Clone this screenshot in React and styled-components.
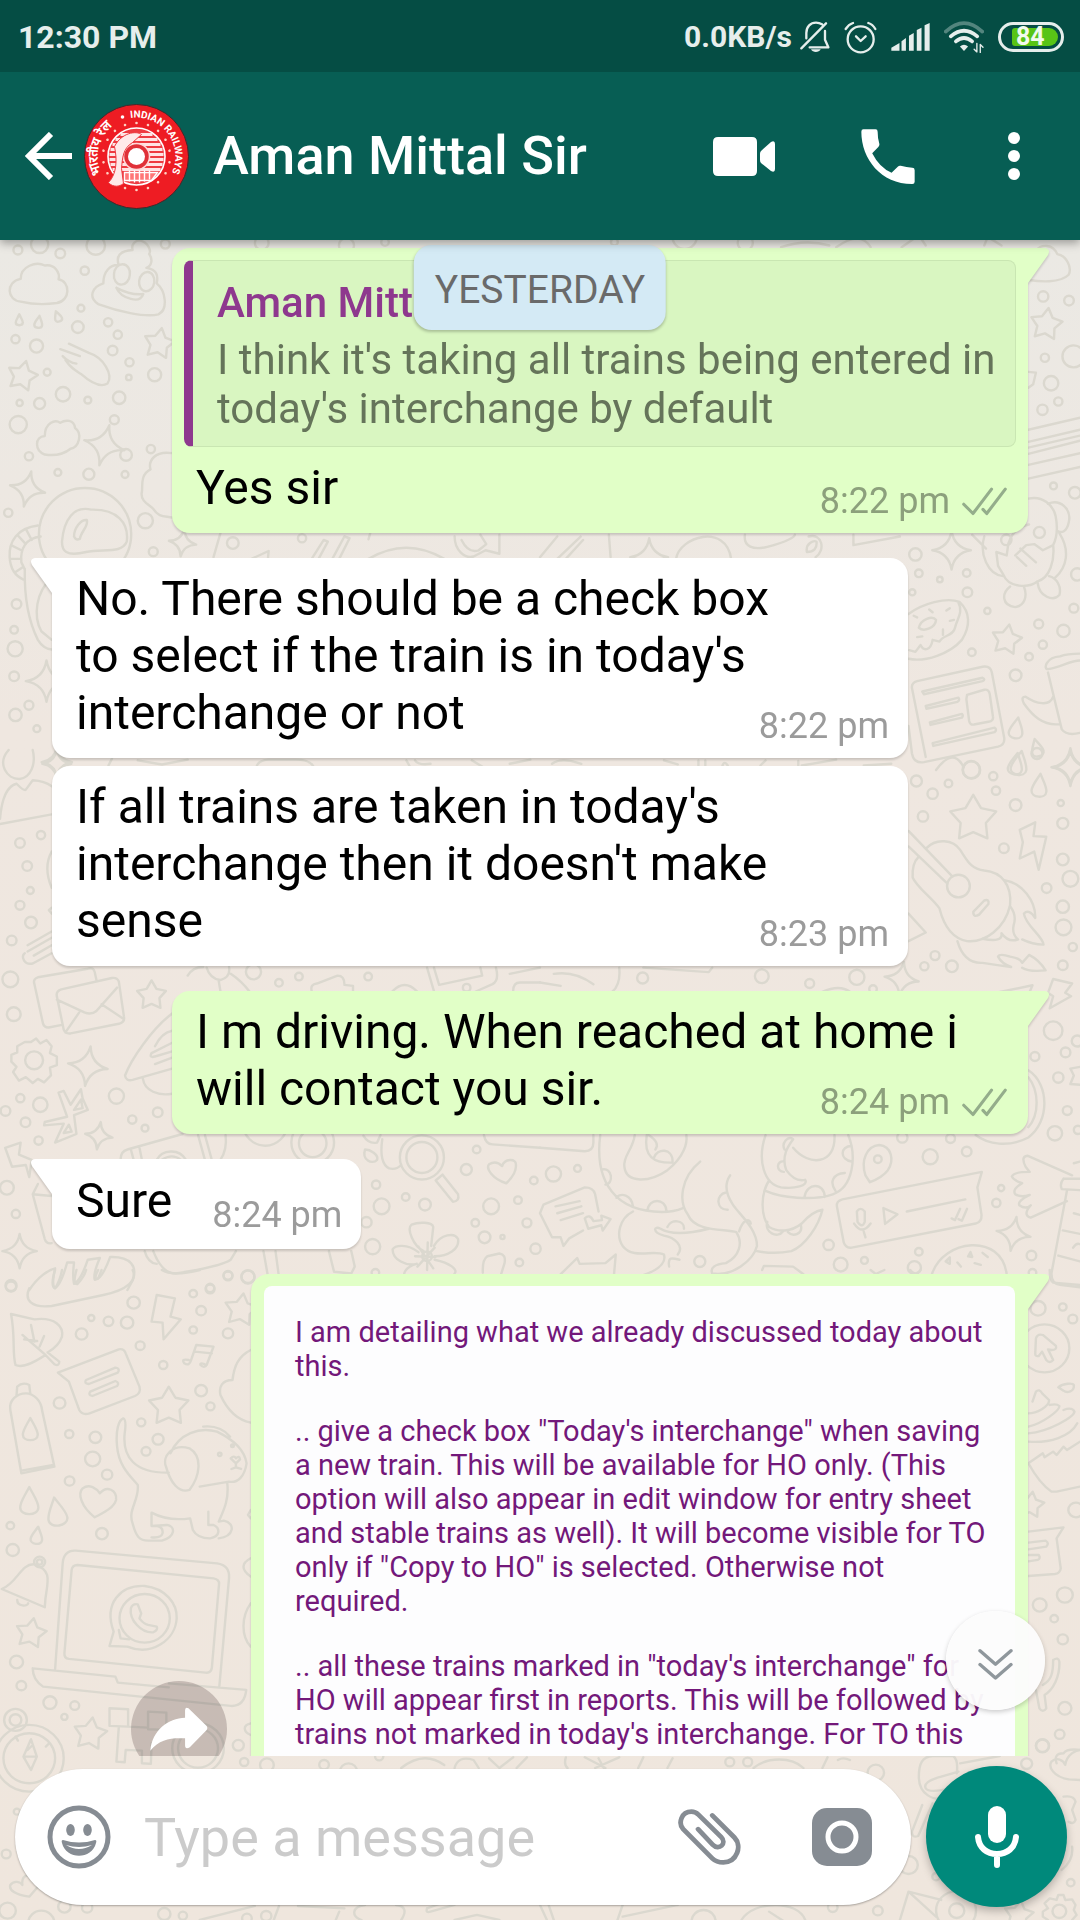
import React from "react";
import styled, { createGlobalStyle } from "styled-components";

const GlobalStyle = createGlobalStyle`
  *, *::before, *::after { box-sizing: border-box; }
  body { margin: 0; font-family: Roboto, "Noto Sans", sans-serif; }
  button { border: 0; padding: 0; background: none; color: inherit; font: inherit; cursor: pointer; }
  svg { display: block; }
`;

/* ---------- page ---------- */

const Screen = styled.div`
  position: relative;
  display: flex;
  flex-direction: column;
  height: 100vh;
  overflow: hidden;
  background: linear-gradient(#e9eae6, #efe7e0 38%, #efe6dd);
`;

const WallpaperSvg = styled.svg`
  position: absolute;
  inset: 0;
  width: 100%;
  height: 100%;
  fill: none;
  stroke: #dbd8cf;
  stroke-width: 7;
  stroke-linecap: round;
  stroke-linejoin: round;
`;

/* ---------- status bar ---------- */

const StatusBar = styled.div`
  position: relative;
  z-index: 3;
  flex: none;
  display: flex;
  align-items: center;
  justify-content: space-between;
  height: 72px;
  padding: 2px 16px 0 18px;
  background: #054d44;
  color: #e6eeec;
  font-weight: 700;
`;

const Clock = styled.time`
  font-size: 32px;
  line-height: 38px;
`;

const StatusRight = styled.div`
  display: flex;
  align-items: center;
  gap: 8px;
  font-size: 30px;
  line-height: 36px;
`;

const StatusIcons = styled.div`
  display: flex;
  align-items: center;
  gap: 14px;
`;

const Glyph = styled.svg`
  flex: none;
  width: ${(p) => p.$w}px;
  height: ${(p) => p.$h}px;
  fill: ${(p) => (p.$line ? "none" : "currentColor")};
  stroke: ${(p) => (p.$line ? "currentColor" : "none")};
  stroke-width: ${(p) => p.$line || 0};
  stroke-linecap: round;
  stroke-linejoin: round;
`;

const Battery = styled.div`
  display: flex;
  width: 66px;
  height: 30px;
  padding: 3px 3px 3px 11px;
  border: 3px solid #e6eeec;
  border-radius: 15px;
`;

const BatteryLevel = styled.span`
  flex: 1;
  padding-left: 4px;
  border-radius: 3px 9px 9px 3px;
  background: #58c416;
  color: #f2faee;
  font-size: 25px;
  line-height: 18px;
`;

/* ---------- header ---------- */

const Header = styled.header`
  position: relative;
  z-index: 2;
  flex: none;
  display: flex;
  align-items: center;
  height: 168px;
  padding: 0 12px 0 24px;
  background: #075e54;
  color: #fff;
  box-shadow: 0 3px 9px rgba(0, 0, 0, 0.35);
`;

const BackButton = styled.button`
  width: 60px;
  height: 96px;
  display: flex;
  align-items: center;
`;

const AvatarSvg = styled.svg`
  flex: none;
  width: 105px;
  height: 105px;
`;

const Title = styled.h1`
  flex: 1;
  margin: 0 0 0 24px;
  font-size: 54px;
  font-weight: 500;
  line-height: 64px;
  white-space: nowrap;
`;

const HeaderButton = styled.button`
  flex: none;
  display: flex;
  align-items: center;
  justify-content: center;
  width: ${(p) => (p.$narrow ? 108 : 144)}px;
  height: 144px;
`;

/* ---------- conversation ---------- */

const Conversation = styled.main`
  position: relative;
  flex: 1;
  min-height: 0;
  overflow: hidden;
`;

const MessageList = styled.ol`
  display: flex;
  flex-direction: column;
  margin: 0;
  padding: 8px 52px 0;
  list-style: none;
`;

const Row = styled.li`
  position: relative;
  display: flex;
  align-items: center;
  justify-content: ${(p) => (p.$out ? "flex-end" : "flex-start")};
  margin-bottom: ${(p) => (p.$joined ? 8 : 25)}px;
`;

const Bubble = styled.article`
  position: relative;
  width: ${(p) => (p.$photo ? "calc(100% - 199px)" : p.$fit ? "auto" : "calc(100% - 120px)")};
  border-radius: ${(p) =>
    p.$tail === "right" ? "18px 0 18px 18px" : p.$tail === "left" ? "0 18px 18px 18px" : "18px"};
  background: ${(p) => (p.$out ? "#e1ffc7" : "#fff")};
  color: ${(p) => (p.$out ? "#e1ffc7" : "#fff")};
  filter: drop-shadow(0 2px 1px rgba(0, 0, 0, 0.16));
`;

const TailSvg = styled.svg`
  position: absolute;
  top: 0;
  ${(p) => (p.$side === "right" ? "left: 100%;" : "right: 100%; transform: scaleX(-1);")}
  width: 21px;
  height: 35px;
  fill: currentColor;
`;

const Body = styled.div`
  display: ${(p) => (p.$fit ? "flex" : "grid")};
  align-items: center;
  gap: 40px;
  min-height: ${(p) => (p.$fit ? 90 : 0)}px;
  padding: ${(p) => (p.$fit ? "12px 19px 13px 24px" : p.$out ? "12px 21px 11px 24px" : "12px 19px 11px 24px")};
  color: #000;
`;

const MessageText = styled.p`
  grid-area: 1 / 1;
  margin: 0;
  padding-bottom: 6px;
  font-size: 48px;
  line-height: 57px;
  white-space: pre-line;
`;

const Meta = styled.footer`
  grid-area: 1 / 1;
  place-self: end;
  display: flex;
  align-items: center;
  gap: 12px;
  color: ${(p) => (p.$out ? "#8ca07c" : "#9b9b9b")};
  font-size: 36px;
  line-height: 42px;
`;

const Quote = styled.blockquote`
  margin: 0;
  padding: 17px 16px 13px 24px;
  border: 1px solid #c9e6b2;
  border-left: 9px solid #8e388e;
  border-radius: 8px;
  background: #d9f6c1;
`;

const QuoteWrap = styled.div`
  padding: 12px 12px 0;
`;

const QuoteName = styled.strong`
  display: block;
  margin-bottom: 7px;
  color: #8e388e;
  font-size: 42px;
  font-weight: 500;
  line-height: 50px;
`;

const QuoteText = styled.p`
  margin: 0;
  color: #65745a;
  font-size: 42px;
  line-height: 49px;
`;

const PhotoFrame = styled.div`
  padding: 12px 13px 12px 13px;
`;

const Photo = styled.div`
  display: flex;
  flex-direction: column;
  gap: 31px;
  min-height: 600px;
  padding: 29px 20px 60px 31px;
  border-radius: 8px;
  background: #fdfdfe;
  color: #73187a;
  font-size: 29px;
  line-height: 34px;
`;

const PhotoParagraph = styled.p`
  margin: 0;
  white-space: pre;
`;

const ForwardButton = styled.button`
  position: absolute;
  top: 407px;
  right: 801px;
  display: flex;
  align-items: center;
  justify-content: center;
  width: 96px;
  height: 96px;
  border-radius: 50%;
  background: rgba(70, 50, 50, 0.24);
  color: #fff;
`;

const DatePill = styled.div`
  position: absolute;
  z-index: 1;
  top: 5px;
  left: 50%;
  transform: translateX(-50%);
  padding: 22px 21px 17px;
  border-radius: 18px;
  background: #d4eaf5;
  box-shadow: 0 2px 3px rgba(0, 0, 0, 0.22);
  color: #6a6a6a;
  font-size: 39px;
  line-height: 46px;
`;

const JumpButton = styled.button`
  position: absolute;
  z-index: 1;
  right: 35px;
  bottom: 46px;
  display: flex;
  align-items: center;
  justify-content: center;
  width: 99px;
  height: 99px;
  padding-top: 8px;
  border-radius: 50%;
  background: rgba(252, 252, 252, 0.96);
  box-shadow: 0 2px 5px rgba(0, 0, 0, 0.2);
  color: #8f979c;
`;

/* ---------- composer ---------- */

const Composer = styled.form`
  position: relative;
  flex: none;
  display: flex;
  align-items: center;
  gap: 15px;
  padding: 10px 13px 13px 15px;
`;

const InputPill = styled.div`
  flex: 1;
  min-width: 0;
  display: flex;
  align-items: center;
  height: 136px;
  padding: 0 39px 0 32px;
  border-radius: 68px;
  background: #fff;
  box-shadow: 0 1px 2px rgba(0, 0, 0, 0.3);
  color: #868c93;
`;

const MessageInput = styled.input`
  flex: 1;
  min-width: 0;
  margin: 0 24px 0 33px;
  padding: 2px 0 0;
  border: 0;
  outline: 0;
  background: none;
  color: #000;
  font: 54px/64px Roboto, "Noto Sans", sans-serif;
  &::placeholder { color: #cbcbcb; opacity: 1; }
`;

const Attachments = styled.div`
  display: flex;
  align-items: center;
  gap: 71px;
`;

const MicButton = styled.button`
  flex: none;
  display: flex;
  align-items: center;
  justify-content: center;
  width: 141px;
  height: 141px;
  border-radius: 50%;
  background: #00897b;
  box-shadow: 0 4px 9px rgba(0, 0, 0, 0.25);
  color: #fff;
`;

/* ---------- wallpaper doodles ---------- */

const S = 0.3444;
const T = 0.3333;

const tiles = [
  {
    x: 0, y: 230, sy: S,
    circles: [[115,42,25],[52,58,13],[175,68,14],[278,45,27],[480,41,13],[246,118,12],[235,227,10],[226,282,17],[314,268,12],[342,304,12],[45,317,12],[106,337,19],[327,350,14],[376,384,12],[374,428,8],[449,420,19],[137,413,10],[183,477,21],[255,494,10],[346,487,18],[57,502,9],[115,504,16],[332,551,13],[53,565,25],[438,636,12],[366,653,17],[84,657,12],[168,704,10],[258,709,16],[363,710,10],[24,821,12],[422,844,22],[445,934,13],[676,909,17],[877,895,12],[48,1086,14],[41,1161,11],[44,1216,22],[41,1296,14],[84,1380,13],[45,1408,18],[107,1448,10],[760,38,20],[1006,45,22],[1118,35,11],[247,883,134]],
    stars: [[462,330,46,10],[65,424,45,14]],
    sparks: [[303,625,60,14],[80,752,52,12],[530,908,40,8],[135,1310,60,0],[165,1545,44,0]],
    drops: [[56,262,17,0],[112,268,19,8],[168,252,17,-20]],
    paths: [
      "M60 208C20 205 15 150 60 142C60 105 105 90 130 103C160 98 175 125 170 143C205 150 205 205 165 212Q110 220 60 208Z",
      "M285 215C255 195 268 165 300 155C300 120 320 100 345 102C335 75 350 60 385 58C380 40 395 30 405 30C430 35 440 60 433 70C445 85 440 105 425 110C455 115 460 130 455 155C480 175 490 230 460 245C420 255 340 235 285 215Z",
      "M377 130A23 28 10 1 1 331 128A23 28 10 1 1 377 130M448 152A22 28 10 1 1 404 148A22 28 10 1 1 448 152M338 168Q380 190 416 186Q408 208 380 200Q348 192 338 168",
      "M175 346L232 366M182 366Q200 385 222 388M200 330L258 357C300 370 330 420 312 446C290 460 260 440 235 418C215 405 205 400 190 378",
      "M130 652C100 640 100 600 130 598C130 560 160 548 175 560C190 550 215 550 218 575C240 590 230 630 205 635C180 655 150 655 130 652Z",
      "M180 905C185 840 215 800 265 812C340 810 375 850 368 905C355 940 300 925 250 935C190 950 180 930 180 905ZM215 890C215 865 235 840 252 842C258 860 235 875 232 897Q220 902 215 890",
      "M110 858C50 865 25 905 28 950C30 985 45 1005 68 1015M118 890C75 895 58 925 62 965L72 985M75 868L92 900M50 885L75 912M32 915L62 930M30 955L62 955M42 995L68 978",
      "M72 985C70 1080 90 1150 110 1190Q125 1215 150 1218M150 1010C105 1050 95 1120 120 1165L150 1190",
      "M500 648C450 640 430 670 437 695C405 710 415 750 412 760C405 790 440 800 445 810C460 835 480 830 500 835",
      "M905 955L940 900L952 905L925 955M965 955L1000 890L1015 895L985 955M1320 890C1320 930 1350 955 1375 948L1410 930L1450 940V885M1340 900Q1360 940 1390 930L1412 912L1395 885",
      "M730 955L780 932L778 955M1070 955Q1180 890 1290 955M620 950L640 880",
      "M1075 880L1070 898",
    ],
  },
  {
    x: 540, y: 230, sy: S,
    circles: [[596,38,22],[216,35,10],[1461,193,15],[1536,205,14],[1466,371,12],[1549,367,32],[1484,445,21],[1459,522,15],[1505,498,12],[1491,743,10],[1553,763,17],[1090,942,18],[1100,997,11],[1161,1015,8],[1239,996,11],[1081,1052,9],[1241,1052,14],[1560,1000,18],[1299,1106,9],[1448,1144,13],[1520,1164,18],[1550,1098,13],[1460,1204,12],[1420,1239,11],[1254,1226,11],[1381,1293,17],[1253,1568,25],[420,20,35],[1354,900,15],[1450,878,16]],
    stars: [[1470,274,48,8],[1355,1190,45,10]],
    sparks: [[1195,930,56,0],[317,950,55,0],[1540,1560,50,0]],
    drops: [[1383,1448,33,10],[1443,1505,28,-14],[1392,1550,38,10]],
    paths: [
      "M1440 60C1455 40 1490 40 1502 70C1530 75 1545 110 1535 130C1510 155 1450 150 1420 145",
      "M1418 580L1568 545M1418 615L1568 580M1418 632L1568 597M1418 650L1568 612M1418 682L1568 648M1418 722L1568 688M1418 412L1440 414L1432 448L1418 458",
      "M1418 780C1460 770 1490 800 1497 830C1505 870 1500 895 1490 915M1420 855C1390 860 1370 880 1360 910L1355 945L1325 935L1330 975L1345 1000C1360 1040 1420 1040 1445 1020C1480 1010 1495 960 1490 915L1460 930L1435 912L1412 915L1380 945M1395 925L1440 965M1385 950L1412 975",
      "M1475 795C1510 780 1545 810 1535 850C1530 875 1515 880 1505 875M1508 880C1540 930 1530 980 1495 1010M1290 890C1275 940 1300 1000 1345 1005M1365 1035C1340 1055 1340 1090 1380 1095C1410 1090 1415 1060 1405 1035M1445 1025C1450 1065 1490 1080 1508 1060C1515 1035 1500 1010 1478 1005M1255 885L1295 925",
      "M1070 1115C1110 1085 1180 1065 1218 1080C1250 1110 1250 1150 1225 1190C1190 1230 1120 1255 1070 1245M1215 1082C1230 1110 1210 1130 1205 1155C1200 1180 1170 1175 1160 1195L1140 1190C1135 1220 1115 1225 1105 1205L1090 1225L1072 1220M1100 1155C1105 1130 1140 1118 1150 1132C1148 1155 1115 1168 1100 1155M1130 1102L1140 1110M1085 1120L1095 1125M1170 1160V1175M1095 1182L1110 1180M1180 1105L1190 1098M1190 1135L1202 1132",
      "M1080 1330Q1078 1315 1095 1310L1285 1268Q1308 1264 1312 1285L1348 1475Q1350 1495 1330 1500L1115 1545Q1085 1550 1080 1520L1070 1440M1080 1330L1120 1530M1110 1340L1285 1300Q1295 1305 1285 1310L1115 1348ZM1120 1382L1215 1358Q1220 1365 1212 1370L1122 1390ZM1132 1430L1225 1405Q1230 1410 1225 1416L1134 1437ZM1140 1490L1320 1445Q1328 1450 1320 1458L1142 1498ZM1240 1350L1290 1335Q1303 1332 1306 1348L1315 1412Q1318 1425 1302 1428L1260 1436Q1248 1438 1246 1425L1238 1362Z",
      "M1568 1230Q1530 1230 1510 1238C1470 1240 1460 1275 1475 1275C1510 1270 1540 1250 1568 1250M1475 1285L1515 1450Q1530 1470 1568 1460M1490 1355C1480 1385 1440 1375 1410 1355Q1395 1355 1405 1375C1430 1410 1460 1440 1508 1435",
      "M595 885C590 920 620 930 660 920C720 905 740 890 740 885M395 955C405 890 540 850 555 955M780 890C820 880 830 930 800 950M775 935C770 910 795 900 803 905C805 925 795 935 775 935M910 885V915L1045 890M0 950L50 890M50 955L118 890M75 955L125 900M200 885L205 950",
      "M700 50Q770 25 840 45M860 50Q930 0 960 50M1050 50L1100 15L1120 45M1290 45L1300 20L1340 45M1150 1568Q1200 1500 1230 1560",
    ],
  },
  {
    x: 0, y: 750, sy: S,
    circles: [[58,270,14],[119,247,12],[79,337,14],[88,408,10],[58,451,13],[90,501,17],[34,553,14],[30,666,23],[40,767,20],[99,901,26],[338,1005,22],[59,1011,12],[117,1030,21],[16,1048,14],[74,1081,14],[458,1052,14],[384,1073,12],[421,1098,10],[112,1134,12],[20,1271,20],[46,1347,12],[736,644,22],[868,658,11],[810,676,11],[1069,658,11],[1355,690,11],[770,1085,64],[908,1140,62],[908,1142,40],[1225,1183,64],[1225,1183,45],[1384,1160,11],[1354,1218,16],[1550,1250,11],[1092,1262,12],[1178,1298,11],[1108,1325,23],[1234,1320,17],[1426,1325,23],[1504,1307,11],[1064,1371,15],[1380,1373,11],[1530,1373,13],[1082,1442,22],[1407,1415,17],[1459,1414,6],[1555,1448,15],[662,1527,13],[720,1530,19],[1508,1488,11],[32,1555,16],[610,1562,12],[1090,1518,11],[1240,1470,14]],
    stars: [[440,713,44,0]],
    sparks: [[255,918,58,8],[287,1120,40,8],[57,1455,50,0],[165,40,42,0]],
    drops: [],
    paths: [
      "M25 0C-10 40 20 85 57 84C90 80 105 40 95 0M0 200C5 140 20 105 48 98Q70 120 75 115L95 88Q130 90 150 105M0 215L150 187M150 295Q125 340 150 400M150 458L142 465L150 475",
      "M80 567L150 527M98 597L150 567M80 585L150 545M150 590L95 620C70 625 60 600 72 590",
      "M100 680Q95 665 110 660L255 635Q272 630 275 645L280 668M100 680L125 795Q130 808 145 805L180 798M165 715Q162 700 178 695L325 662Q340 660 345 672L360 775Q363 790 345 795L205 823Q190 825 185 812ZM165 725L245 762Q265 770 280 758L340 690M230 762L190 820M295 738L358 780",
      "M90 848L105 838L117 852L135 842L150 860L145 880L165 890V915L145 922L148 945L128 965L110 955L95 967L75 950L55 960L38 935L48 920L33 905V885L50 878V860L72 848Z",
      "M500 765C440 810 380 900 363 945Q365 962 385 958L500 925M500 815Q470 820 450 860M500 850L440 880Q432 895 450 890L500 875M500 893L450 912M415 955C420 990 460 1005 500 998",
      "M170 995L185 990L205 1030L235 985L240 1012L255 1045L215 1060L222 1115L160 1140L185 1085L128 1090L130 1080L195 1065ZM185 1112L200 1088L208 1108ZM215 1045L235 1015L240 1040Z",
      "M15 1155L60 1140L55 1175L92 1190L85 1240L75 1205L35 1210ZM110 1260L95 1290L130 1420Q135 1435 150 1432M95 1290L150 1295",
      "M350 1190Q350 1165 370 1160L530 1115M380 1160L388 1190M405 1155L412 1190M455 1190C470 1160 520 1155 540 1190M575 1118L595 1190M595 1118L615 1190M655 1118Q660 1160 640 1190M470 1190Q500 1170 525 1190",
      "M85 1568C110 1530 140 1510 160 1505Q150 1550 158 1562Q175 1560 195 1488H215Q210 1530 215 1550Q235 1540 255 1480L290 1475Q270 1520 275 1538Q295 1540 320 1472C380 1470 400 1500 385 1540L370 1568",
      "M420 1455Q430 1490 455 1492M445 1455Q470 1520 510 1520Q640 1500 670 1480L685 1455M765 1455L785 1568M800 1455L815 1568M955 1455L970 1515L1020 1520L1030 1500L1020 1455",
      "M1110 1130Q1100 1200 1130 1215Q1150 1220 1165 1205M1055 1120Q1070 1145 1095 1140L1105 1118M1060 1160C1050 1190 1080 1205 1095 1190C1100 1175 1075 1160 1060 1160ZM1265 1250L1285 1233L1330 1290Q1335 1310 1315 1312Z",
      "M1470 1258C1430 1245 1410 1215 1420 1203Q1440 1190 1458 1208C1465 1185 1500 1185 1498 1205Q1500 1230 1470 1258Z",
      "M1230 1455C1200 1440 1180 1390 1195 1378C1215 1370 1255 1370 1258 1385L1252 1440M1260 1440C1280 1405 1320 1400 1330 1420C1335 1450 1300 1470 1262 1470M1262 1480C1310 1490 1330 1510 1320 1520L1318 1525M1215 1458C1180 1430 1145 1440 1140 1450C1140 1480 1180 1500 1210 1492M1210 1492C1175 1500 1170 1525 1175 1525M1205 1470L1265 1472M1215 1442L1258 1505M1242 1430L1240 1510M1262 1445L1212 1500",
      "M545 655Q560 630 590 630M600 632Q610 665 640 668Q670 660 665 630M635 670L640 700M670 650Q700 670 725 702M905 700Q900 680 920 678L980 655Q1000 655 1000 680M1000 682L1025 685L1025 702M1140 700Q1175 665 1210 700M1240 632L1260 700M1260 632L1275 682L1400 655L1395 632M1440 632Q1450 670 1430 680L1380 702M1480 650L1568 632M1490 700Q1490 675 1510 675H1568M1405 1118Q1410 1145 1430 1145L1568 1155M1402 1518Q1400 1480 1415 1470L1450 1462Q1470 1465 1465 1490L1455 1522",
      "M315 45L325 25M400 30L470 42L545 28M745 48Q750 30 780 28H860Q900 28 910 48M1180 30L1190 48M1205 30Q1215 45 1250 40M1370 30L1400 48M1480 40L1540 28",
    ],
  },
  {
    x: 540, y: 750, sy: S,
    circles: [[1252,57,25],[1316,76,12],[1186,97,11],[1093,90,16],[1140,127,15],[1324,118,12],[1381,160,17],[1112,193,15],[1443,10,16],[1512,154,9],[1518,213,16],[1347,285,14],[1518,318,17],[1540,374,23],[1471,401,14],[1518,455,18],[1520,515,23],[1547,572,12],[1147,597,13],[1116,628,12],[1196,628,17],[1518,625,14],[1215,395,33],[298,662,16],[644,657,20],[783,678,13],[920,660,22],[967,694,11],[1490,815,27],[1437,890,13],[1526,878,14],[1505,951,15],[1531,1047,13],[1495,1113,21],[1052,1125,15],[1192,1128,13],[1239,1166,14],[1133,1181,22],[981,1188,11],[39,1231,22],[109,1215,10],[1339,1272,9],[1325,1315,12],[838,1437,15],[464,1485,16],[873,1494,20],[942,1482,10],[1100,1457,11],[1087,1503,19],[1427,1468,14],[1430,1518,11],[1560,845,16],[1562,1103,12]],
    stars: [[1258,200,70,0]],
    sparks: [[1050,665,50,8],[1375,1405,50,10],[1540,50,55,0]],
    drops: [[1381,42,34,10],[1450,105,36,5]],
    paths: [
      "M1393 232L1438 210L1433 250L1470 252L1448 348L1435 295L1393 315L1402 268Z",
      "M1070 235L1195 365M1070 280L1180 385M1122 285C1150 255 1200 260 1220 290C1240 320 1250 345 1290 350C1340 355 1370 390 1365 450C1350 520 1290 560 1240 555C1190 545 1170 500 1160 460C1140 430 1095 400 1082 370Q1080 330 1098 312M1258 470L1290 437Q1305 432 1302 447L1275 478Q1258 488 1258 470Z",
      "M1348 378C1400 385 1440 440 1438 488Q1420 460 1405 475C1410 510 1460 540 1462 565Q1430 565 1400 550M1366 455Q1385 480 1375 510Q1370 535 1388 550Q1360 560 1340 532Q1345 560 1285 548M1212 555C1225 600 1250 620 1285 618Q1330 625 1368 630Q1340 620 1330 600Q1335 590 1365 600Q1395 605 1400 618L1420 595Q1450 610 1468 640Q1420 645 1400 632M1070 475L1120 530L1070 555",
      "M1490 665L1545 678L1525 705L1542 715L1480 750L1490 715L1475 705ZM1325 705L1430 683L1422 702M1418 930C1480 970 1480 1080 1418 1125C1360 1155 1300 1145 1265 1118M1418 950C1450 990 1450 1060 1418 1095M1568 920L1540 925L1550 945L1540 970L1568 972",
      "M175 1118C160 1230 200 1330 330 1340Q380 1345 415 1330M245 1210C250 1260 320 1255 370 1220C420 1180 428 1140 425 1118M245 1210C240 1180 270 1160 275 1118M310 1118C300 1180 330 1200 385 1198M330 1185C340 1155 385 1155 385 1195M315 1118Q350 1140 335 1160M180 1218C210 1210 215 1260 190 1262M222 1300C235 1285 265 1290 270 1325M312 1338C315 1300 365 1300 367 1338",
      "M465 1195C410 1240 400 1310 430 1350C450 1400 540 1390 570 1400C590 1430 580 1470 540 1490Q490 1495 500 1520C560 1530 620 1480 630 1440C630 1390 580 1350 560 1320C540 1290 535 1260 552 1235M540 1285C510 1290 510 1335 545 1335M578 1398C590 1360 610 1360 612 1375M270 1340C230 1360 220 1410 240 1440C270 1480 330 1450 360 1465Q370 1500 300 1525M400 1465C420 1440 390 1415 360 1410C325 1400 330 1380 350 1390Q390 1415 490 1390M370 1385C380 1360 420 1365 418 1390M375 1500C370 1470 385 1475 405 1480",
      "M655 1118C630 1190 650 1260 700 1270C740 1275 780 1265 770 1248Q740 1255 715 1220C700 1180 720 1150 735 1130C720 1120 700 1140 710 1160M735 1155C780 1210 860 1205 855 1118M895 1118C920 1180 910 1270 850 1290C790 1310 700 1300 655 1280M710 1195C685 1190 685 1225 708 1225M905 1150C870 1150 870 1190 905 1195M885 1228C850 1230 840 1255 858 1280M768 1298C775 1255 825 1255 827 1298M665 1250C640 1290 640 1350 665 1385C690 1400 730 1400 760 1375Q790 1340 820 1335C810 1380 770 1440 730 1455Q680 1465 630 1455M660 1370C650 1400 690 1420 705 1398M720 1400C735 1415 765 1405 757 1378",
      "M945 1235C930 1190 950 1150 985 1147C1020 1150 1030 1190 1010 1220Q995 1240 958 1255ZM862 1325Q860 1310 878 1305L1283 1225L1270 1270L1282 1350Q1283 1370 1265 1375L905 1445Q888 1448 882 1430ZM1065 1340L1235 1305M997 1330L1038 1348L1002 1376ZM920 1340Q930 1325 943 1340V1370Q935 1390 922 1370ZM912 1375Q935 1410 960 1375M940 1398L945 1415M1195 1360L1205 1365L1220 1332M1215 1362L1225 1367L1240 1332",
      "M1545 1235L1415 1178Q1395 1180 1410 1210L1422 1225Q1375 1225 1370 1238Q1375 1250 1400 1258Q1370 1275 1380 1290Q1395 1300 1422 1292Q1385 1310 1392 1322Q1410 1335 1425 1322Q1400 1350 1425 1358L1530 1310M1520 1245H1568M1515 1275L1568 1278M1520 1245Q1508 1260 1515 1275M1530 1280L1485 1520Q1485 1550 1510 1553L1568 1560M1518 1395L1568 1405M1505 1468L1568 1485M1550 1200L1568 1195M1550 1345L1568 1350M1548 1445Q1558 1430 1568 1435",
      "M0 1345L10 1320L130 1270Q155 1270 160 1290L170 1340M0 1345L35 1415L60 1415L68 1440L85 1418L125 1395M130 1360Q145 1345 155 1368L180 1365L178 1352L205 1362L182 1395L178 1380L140 1390ZM45 1325L115 1310M50 1345L120 1325M60 1365L125 1345",
      "M1138 1522C1170 1420 1340 1400 1355 1522M60 1522L108 1475L115 1492L190 1490L220 1465L215 1522M645 1510L650 1498L735 1500L765 1522M1178 1485L1190 1473V1492ZM1243 1470L1250 1458L1255 1472ZM1212 1488L1222 1500ZM1285 1460L1300 1472ZM1262 1490L1280 1495ZM0 1155L130 1165Q155 1165 155 1140V1118M230 632Q235 680 210 702M0 675L60 685M40 650Q100 640 155 680M300 632L490 645L500 632M820 702Q870 680 900 702",
      "M35 40Q60 20 120 40M360 30L400 42M460 45V30M480 45V30M530 45Q535 30 545 45M640 45L655 30M750 45V32M760 45L860 28M940 45L1020 40",
    ],
  },
  {
    x: 0, y: 1270, sy: T,
    circles: [[32,50,15],[388,98,18],[265,144,9],[315,154,14],[369,158,18],[237,192,17],[561,71,11],[610,57,13],[662,16,13],[720,20,19],[584,122,14],[561,180,11],[662,190,15],[407,227,13],[474,285,12],[584,362,17],[173,399,17],[611,409,12],[410,457,12],[201,492,12],[277,502,17],[459,508,16],[424,544,13],[269,567,22],[311,614,15],[202,633,14],[638,553,5],[675,527,4],[30,767,11],[296,791,17],[37,840,18],[115,876,16],[115,876,8],[48,1176,19],[62,1247,14],[145,1298,19],[217,1307,13],[187,1341,9],[45,1350,33],[45,1350,17],[692,1426,16],[85,1465,100],[85,1465,75],[575,1435,75],[575,1435,58],[420,1045,73]],
    stars: [[490,410,60,0],[700,120,50,8],[90,1090,46,10],[262,1392,50,8]],
    sparks: [],
    drops: [[88,480,36,0],[85,695,44,0],[165,728,46,-10],[107,798,28,8]],
    paths: [
      "M85 55C70 90 90 115 150 108L300 75C370 60 400 30 385 0M160 0Q145 50 160 55Q175 30 180 0M222 0Q210 45 225 42Q245 20 250 0M285 0Q270 30 285 25L295 0M470 0Q500 20 580 0",
      "M32 132L100 148C160 140 185 170 180 200C170 230 150 240 138 247L172 275Q172 290 158 283L132 255C95 280 65 295 45 285C35 250 45 200 32 132ZM65 195L132 255M90 165L100 215M70 208L108 213M128 198L115 230",
      "M168 308L345 238Q360 235 365 250L405 350Q410 370 392 378L260 430Q240 437 230 420L200 335ZM250 330L335 293Q350 295 342 308L258 342Q242 340 250 330ZM262 365L335 333Q348 338 340 348L268 378Q255 375 262 365Z",
      "M455 75L508 85L495 140L525 148L475 208L472 158L440 155ZM548 270Q525 265 535 280Q550 290 555 270L570 225L620 230L600 285Q580 275 582 285Q595 298 602 280M566 245L615 250M48 375L50 350Q65 335 85 345L88 372M30 420C25 390 50 370 75 370C100 370 120 395 122 420L158 590L62 610ZM62 602L155 585",
      "M340 530C335 480 345 450 358 445Q368 450 362 490C355 560 390 610 490 608M340 530C345 590 380 620 400 645C405 690 370 720 385 760C395 800 405 812 430 812H470C510 800 510 770 485 765L440 768V728C480 750 520 750 552 745L560 780C570 800 590 805 610 805C640 800 640 775 620 765L605 765V725M635 805C680 800 685 760 650 752L635 755C650 720 665 690 660 640M482 590C470 560 500 520 550 535C590 560 580 620 550 660C520 670 495 640 482 590ZM495 550C520 490 580 470 630 485C680 510 710 540 716 580C710 620 690 640 665 635L580 650M590 470Q640 465 668 500M670 565Q680 555 685 565Q695 555 697 568L685 580ZM685 580V592L672 597M685 592L700 597M440 768Q475 765 472 790Q468 805 440 802",
      "M275 742C235 710 225 670 240 655C260 640 280 655 290 670C310 645 340 660 337 690C330 715 300 728 275 742Z",
      "M5 957C50 940 60 880 100 883C150 900 140 930 132 985L130 1012ZM50 990C50 1010 80 1010 82 1000",
      "M160 1198L182 880Q185 840 220 842L630 880Q668 885 665 925L637 1248M187 1150L208 900Q210 885 225 885L620 925Q637 928 636 942L615 1195Q612 1210 597 1208L200 1167Q186 1165 187 1150ZM95 1195L335 1220L342 1238L490 1252M95 1195Q95 1230 125 1250L670 1308Q710 1310 715 1260L490 1240",
      "M330 1085C300 1000 350 945 420 948C480 955 515 1000 513 1045C510 1110 440 1160 370 1130L318 1128ZM345 1080L350 1105L375 1108M380 1015Q385 1000 400 1003L410 1030L405 1045Q415 1060 430 1065L455 1070Q460 1080 445 1087C410 1090 375 1050 380 1015Z",
      "M728 240C690 260 680 290 675 330C645 330 635 350 640 375C660 420 690 450 728 458M728 865C700 880 700 900 728 920M728 1000C700 1040 700 1100 728 1130M728 1360C705 1365 705 1385 728 1395M728 720L720 735L728 745",
      "M318 1315L372 1318V1370L318 1368ZM372 1370L430 1373V1325L483 1328V1380L430 1378M345 1370L338 1475L362 1477L365 1440L412 1442V1480L438 1482L440 1420M90 1408L68 1460L90 1500L107 1460ZM68 1460H107M80 1440L95 1425M45 1400L52 1412M133 1430L143 1420",
    ],
  },
  {
    x: 540, y: 1270, sy: T,
    circles: [[1518,111,11],[1547,147,13],[1446,115,22],[1465,235,72],[1556,720,22],[1524,975,23],[1451,1005,20],[1493,1046,11],[1518,1108,15],[1524,1315,19],[1509,1393,14],[1459,1427,19]],
    stars: [[1425,705,40,8]],
    sparks: [],
    drops: [],
    paths: [
      "M1440 205Q1445 190 1460 195L1498 228Q1502 240 1485 240L1475 238L1490 270Q1480 282 1470 270L1458 245L1448 258Q1437 260 1438 250Z",
      "M1505 352C1520 338 1548 340 1550 345C1552 365 1530 370 1520 362ZM1430 395L1440 365Q1450 355 1458 370L1478 390C1480 410 1440 430 1418 430M1418 470C1460 460 1510 420 1508 408Q1500 400 1480 405M1418 490C1480 485 1550 440 1552 425Q1545 410 1520 420M1418 515C1480 520 1540 500 1560 460M1418 580L1460 550L1465 562L1490 545L1500 555L1520 530L1530 540L1568 515M1418 580Q1450 640 1485 665H1500L1568 650",
      "M1418 785L1520 772L1500 805L1512 895Q1510 910 1495 912L1418 918M1418 818L1468 812Q1480 820 1470 830L1418 838M1418 855L1448 855Q1455 865 1445 870L1418 874",
      "M1490 1170Q1505 1160 1508 1175C1510 1220 1490 1260 1465 1275L1470 1315Q1460 1330 1450 1315L1440 1260M1490 1170C1490 1210 1485 1230 1460 1245M1500 1480Q1490 1450 1520 1450Q1530 1435 1568 1440M1568 45L1490 38Q1480 30 1480 0M960 0L975 12L1000 0M1075 0Q1090 20 1105 0",
    ],
  },
  {
    x: 0, y: 1740, sy: T,
    circles: [[709,66,12],[775,75,20],[941,74,14],[1012,95,25],[1101,49,12],[18,342,13],[22,512,24],[187,500,18],[253,503,15],[477,522,18],[531,527,12],[773,528,15],[717,535,14],[120,550,38],[49,215,9]],
    stars: [],
    sparks: [],
    drops: [],
    paths: [
      "M85 470C45 465 25 450 30 435C40 420 60 425 65 435C60 400 95 400 105 415L110 440ZM1165 84Q1230 30 1290 75M1320 84Q1330 45 1375 60L1390 84M1420 55L1450 84L1490 52M1500 84L1530 52M810 498L795 540M865 498L1000 505M975 540L985 515M580 540L740 498M1060 495C1020 500 1020 530 1050 540M1150 495Q1190 500 1165 540M1240 505L1275 492M1240 505Q1235 520 1250 515L1320 495M1320 540L1385 525L1450 540",
    ],
  },
  {
    x: 540, y: 1740, sy: T,
    circles: [[551,66,13],[603,66,13],[975,98,24],[1413,71,16],[1459,18,19],[1070,375,27],[1541,428,11],[981,512,14],[850,502,14],[475,545,35],[1150,410,11],[1208,512,58],[1210,512,22],[1508,514,20]],
    stars: [[1390,525,44,8]],
    sparks: [],
    drops: [],
    paths: [
      "M1535 118C1490 110 1475 80 1485 65C1500 50 1520 60 1525 75C1530 40 1560 30 1568 30M1535 118L1568 120M1100 110C1100 70 1110 50 1140 48H1200Q1215 60 1210 100M1100 110C1100 160 1140 190 1190 170M1165 110L1215 95M1165 110Q1110 125 1120 145Q1130 160 1190 145M1220 70L1335 48M1110 195L1080 275Q1080 295 1098 288L1140 190M1070 455L1045 540M1070 455L1165 480M1070 455L1150 530",
      "M1500 480L1505 465H1520L1525 480L1545 478L1555 495L1550 510L1558 525L1545 540M1500 480L1480 475L1465 490L1475 505L1460 515V530L1475 540M1520 170Q1550 165 1555 185L1545 210L1555 240Q1550 255 1535 245M1545 320Q1550 360 1515 390M240 495L225 540M240 530L400 495M585 540C620 480 750 480 770 540M665 515L710 545M75 52C70 70 75 80 80 84M300 52Q290 75 285 84M130 52L190 84M230 52L160 84M170 55L185 84M620 84C660 50 730 50 765 84M835 52L820 84M865 60Q880 50 900 60M370 84L385 55M0 495L20 540M25 495L40 540",
    ],
  },
];

const starPath = (r) =>
  Array.from({ length: 10 }, (_, i) => {
    const a = (Math.PI / 5) * i;
    const d = i % 2 ? r * 0.55 : r;
    return `${i ? "L" : "M"}${(Math.sin(a) * d).toFixed(1)} ${(-Math.cos(a) * d).toFixed(1)}`;
  }).join("") + "Z";

const sparkPath = (r) => {
  const k = r * 0.14;
  return `M0 ${-r}Q${k} ${-k} ${r} 0Q${k} ${k} 0 ${r}Q${-k} ${k} ${-r} 0Q${-k} ${-k} 0 ${-r}Z`;
};

const dropPath = (h) =>
  `M0 ${-h}C${h * 0.3} ${-h * 0.4} ${h * 0.6} 0 ${h * 0.6} ${h * 0.4}C${h * 0.6} ${h} ${-h * 0.6} ${h} ${-h * 0.6} ${h * 0.4}C${-h * 0.6} 0 ${-h * 0.3} ${-h * 0.4} 0 ${-h}Z`;

const placed = (list, shape) =>
  list.map(([x, y, r, turn]) => (
    <path key={`${x}-${y}`} d={shape(r)} transform={`translate(${x} ${y}) rotate(${turn})`} />
  ));

function Wallpaper() {
  return (
    <WallpaperSvg viewBox="0 0 1080 1920" preserveAspectRatio="xMidYMin slice" aria-hidden="true">
      {tiles.map((t) => (
        <g key={`${t.x}-${t.y}`} transform={`translate(${t.x} ${t.y}) scale(${S} ${t.sy})`}>
          {t.circles.map(([cx, cy, r]) => (
            <circle key={`${cx}-${cy}-${r}`} cx={cx} cy={cy} r={r} />
          ))}
          {placed(t.stars, starPath)}
          {placed(t.sparks, sparkPath)}
          {placed(t.drops, dropPath)}
          {t.paths.map((d) => (
            <path key={d} d={d} />
          ))}
        </g>
      ))}
    </WallpaperSvg>
  );
}

/* ---------- drawings ---------- */

function Avatar() {
  return (
    <AvatarSvg viewBox="-52.5 -52.5 105 105" role="img" aria-label="Indian Railways">
      <circle r="52" fill="#ee1c23" stroke="#3b2a2c" strokeWidth="1" />
      <defs>
        <path id="ring-right" d="M-6 -38.500A39 39 0 0 1 13 36.770" />
        <path id="ring-left" d="M-35 17A39 39 0 0 1 -14 -36.400" />
      </defs>
      <g fill="#fff" fontFamily="Roboto, sans-serif" fontWeight="700">
        <text fontSize="10"><textPath href="#ring-right">INDIAN RAILWAYS</textPath></text>
        <text fontSize="13"><textPath href="#ring-left">भारतीय रेल</textPath></text>
      </g>
      <circle cx="-14" cy="-39.5" r="1.8" fill="#fff" />
      {Array.from({ length: 18 }, (_, i) => (
        <circle key={i} cx="0" cy="-33.5" r="1.3" fill="#ffd2c4" transform={`rotate(${i * 20})`} />
      ))}
      <circle r="28.5" fill="#ee3a40" stroke="#fff" strokeWidth="1.6" />
      <path d="M-16 -22H16M-21 -17H21M-24 -12H24M-26 -7H26M-27 -2H27M-27 3H27M-26 8H26M-24 13H24" stroke="#ffe4e4" strokeWidth="3" />
      <circle r="13" fill="#e03038" stroke="#ffd9d9" strokeWidth="1.5" />
      <circle r="8.5" fill="#fff" />
      <path d="M-22 -10C-15 -24 0 -26 5 -22L-4 -14C-14 -8 -14 2 -15 12L-13 27C-19 32 -26 29 -28 26C-20 18 -19 4 -22 -10Z" fill="#ffe9e9" stroke="#ee3a40" strokeWidth="1" />
      <path d="M-12 16H21L15 24H-12Z" fill="#f77" stroke="#fff" strokeWidth="1.4" />
      <path d="M-7 14V25M-2 14V26M3 14V26M8 14V25M13 14V23" stroke="#fff" strokeWidth="1.4" />
    </AvatarSvg>
  );
}

const BackIcon = () => (
  <Glyph $w={48} $h={48} $line={6} viewBox="0 0 48 48">
    <path d="M4 24H48M27 2L5 24L27 46" strokeLinecap="butt" strokeLinejoin="miter" />
  </Glyph>
);

const VideoIcon = () => (
  <Glyph $w={63} $h={39} viewBox="0 0 63 39">
    <path d="M5 0H39Q44 0 44 5V34Q44 39 39 39H5Q0 39 0 34V5Q0 0 5 0ZM48 14L58 5Q62 3 62 7V32Q62 36 58 34L48 26Q47 25 47 23V17Q47 15 48 14Z" />
  </Glyph>
);

const PhoneIcon = () => (
  <Glyph $w={54} $h={55} viewBox="931 386 159 163" preserveAspectRatio="none">
    <path d="M938 387H974Q980 387 980 394Q980 415 985 430Q986 435 982 439L964 458Q985 500 1021 516L1040 497Q1043 494 1048 495Q1065 500 1082 501Q1089 501 1089 508V542Q1089 549 1082 549C990 549 932 475 932 394Q932 387 938 387Z" />
  </Glyph>
);

const DotsIcon = () => (
  <Glyph $w={12} $h={48} viewBox="0 0 12 48">
    <circle cx="6" cy="6" r="6" /><circle cx="6" cy="24" r="6" /><circle cx="6" cy="42" r="6" />
  </Glyph>
);

const MutedBell = () => (
  <Glyph $w={30} $h={32} $line={7} viewBox="745 62 90 96">
    <path d="M764 114V98C764 78 777 67 793 67C800 67 806 69 811 72M749 144L823 69M820 92V118L830 141H774" />
    <path d="M778 147H807C802 158 783 158 778 147Z" fill="currentColor" stroke="none" />
  </Glyph>
);

const AlarmIcon = () => (
  <Glyph $w={33} $h={33} $line={7} viewBox="878 60 99 99">
    <circle cx="928" cy="115" r="39" />
    <path d="M883 84Q892 70 905 66M951 66Q964 70 972 84M914 106L928 120L943 106" />
  </Glyph>
);

const SignalIcon = () => (
  <Glyph $w={39} $h={28} viewBox="1016 64 115 84" preserveAspectRatio="none">
    <path d="M1017 147V138L1041 124V147ZM1047 147V119L1060 109V147ZM1069 147V102L1083 94V147ZM1092 147V85L1106 78V147ZM1115 147V71L1130 64V147Z" />
  </Glyph>
);

const WifiIcon = () => (
  <Glyph $w={40} $h={32} $line={11} viewBox="1171 64 118 94">
    <path d="M1176 95Q1230 45 1284 95" opacity="0.35" />
    <path d="M1191 109Q1230 76 1269 109M1206 124Q1230 104 1254 124" />
    <path d="M1218 139Q1230 129 1242 139L1230 152Z" fill="currentColor" stroke="none" />
    <path d="M1268 130V155L1260 147M1278 157V133L1286 141" strokeWidth="4" />
  </Glyph>
);

const Ticks = () => (
  <Glyph $w={45} $h={29} $line={9} viewBox="1225 743 131 84" color="#94ad8b" role="img" aria-label="Delivered">
    <path d="M1230 793L1257 820L1311 749M1286 808L1297 820L1351 749" />
  </Glyph>
);

const ForwardIcon = () => (
  <Glyph $w={58} $h={44} viewBox="436 1305 172 132" preserveAspectRatio="none">
    <path d="M437 1436C442 1375 490 1338 540 1337V1315Q540 1303 550 1309L604 1362Q608 1368 604 1374L554 1426Q540 1434 540 1420V1399C500 1397 465 1400 437 1436Z" />
  </Glyph>
);

const JumpIcon = () => (
  <Glyph $w={35} $h={33} $line={10} viewBox="1273 1137 102 98">
    <path d="M1278 1145L1324 1185L1370 1145M1278 1186L1324 1226L1370 1186" />
  </Glyph>
);

const SmileIcon = () => (
  <Glyph $w={64} $h={64} viewBox="0 0 64 64">
    <circle cx="32" cy="32" r="29" fill="none" stroke="currentColor" strokeWidth="5" />
    <ellipse cx="23.500" cy="25" rx="4.300" ry="6" />
    <ellipse cx="40.500" cy="25" rx="4.300" ry="6" />
    <path fillRule="evenodd" d="M16 35Q32 40 48 35Q50 35 49 38C45 55 19 55 15 38Q14 35 16 35ZM19 40Q32 48 45 40Q32 44 19 40Z" />
  </Glyph>
);

const ClipIcon = () => (
  <Glyph $w={63} $h={56} $line={14} viewBox="402 207 182 167" preserveAspectRatio="none">
    <path d="M501 226L565 292C588 316 573 366 533 366C518 366 509 362 501 354L417 267C402 250 411 215 441 215C450 215 456 219 461 224L527 291C544 309 521 333 502 313L460 267" />
  </Glyph>
);

const CameraIcon = () => (
  <Glyph $w={60} $h={58} viewBox="0 0 60 58">
    <rect width="60" height="58" rx="15" />
    <circle cx="30" cy="29" r="14" fill="none" stroke="#fff" strokeWidth="5" />
  </Glyph>
);

const MicIcon = () => (
  <Glyph $w={44} $h={62} viewBox="0 0 44 62">
    <rect x="13" y="0" width="18" height="37" rx="9" />
    <path d="M3 31C4 42 12 48 22 48C32 48 40 42 41 31M22 49V59" fill="none" stroke="currentColor" strokeWidth="6" />
  </Glyph>
);

const Tail = ({ side }) => (
  <TailSvg $side={side} viewBox="0 0 21 35" aria-hidden="true">
    <path d="M0 0H17Q23 1 20 7L0 35Z" />
  </TailSvg>
);

/* ---------- messages ---------- */

const messages = [
  {
    out: true, tail: true, time: "8:22 pm", text: "Yes sir",
    quote: { name: "Aman Mittal Sir", text: "I think it's taking all trains being entered in today's interchange by default" },
  },
  { tail: true, time: "8:22 pm", joined: true, text: "No. There should be a check box\nto select if the train is in today's\ninterchange or not" },
  { time: "8:23 pm", text: "If all trains are taken in today's\ninterchange then it doesn't make\nsense" },
  { out: true, tail: true, time: "8:24 pm", text: "I m driving. When reached at home i\nwill contact you sir." },
  { tail: true, fit: true, time: "8:24 pm", text: "Sure" },
];

const photoParagraphs = [
  "I am detailing what we already discussed today about\nthis.",
  ".. give a check box \"Today's interchange\" when saving\na new train. This will be available for HO only. (This\noption will also appear in edit window for entry sheet\nand stable trains as well). It will become visible for TO\nonly if \"Copy to HO\" is selected. Otherwise not\nrequired.",
  ".. all these trains marked in \"today's interchange\" for\nHO will appear first in reports. This will be followed by\ntrains not marked in today's interchange. For TO this",
];

function Message({ out, tail, fit, joined, quote, text, time }) {
  const side = out ? "right" : "left";
  return (
    <Row $out={out} $joined={joined}>
      <Bubble $out={out} $fit={fit} $tail={tail && side}>
        {tail && <Tail side={side} />}
        {quote && (
          <QuoteWrap>
            <Quote>
              <QuoteName>{quote.name}</QuoteName>
              <QuoteText>{quote.text}</QuoteText>
            </Quote>
          </QuoteWrap>
        )}
        <Body $fit={fit} $out={out}>
          <MessageText>{text}</MessageText>
          <Meta $out={out}>
            <time>{time}</time>
            {out && <Ticks />}
          </Meta>
        </Body>
      </Bubble>
    </Row>
  );
}

export default function App() {
  return (
    <>
      <GlobalStyle />
      <Screen>
        <Wallpaper />
        <StatusBar>
          <Clock>12:30 PM</Clock>
          <StatusRight>
            <span>0.0KB/s</span>
            <StatusIcons>
              <MutedBell />
              <AlarmIcon />
              <SignalIcon />
              <WifiIcon />
              <Battery><BatteryLevel>84</BatteryLevel></Battery>
            </StatusIcons>
          </StatusRight>
        </StatusBar>
        <Header>
          <BackButton type="button" aria-label="Back"><BackIcon /></BackButton>
          <Avatar />
          <Title>Aman Mittal Sir</Title>
          <HeaderButton type="button" aria-label="Video call"><VideoIcon /></HeaderButton>
          <HeaderButton type="button" aria-label="Voice call"><PhoneIcon /></HeaderButton>
          <HeaderButton type="button" aria-label="More options" $narrow><DotsIcon /></HeaderButton>
        </Header>
        <Conversation>
          <DatePill>YESTERDAY</DatePill>
          <MessageList>
            {messages.map((m) => (
              <Message key={m.text} {...m} />
            ))}
            <Row $out>
              <ForwardButton type="button" aria-label="Forward"><ForwardIcon /></ForwardButton>
              <Bubble $out $photo $tail="right">
                <Tail side="right" />
                <PhotoFrame>
                  <Photo>
                    {photoParagraphs.map((p) => (
                      <PhotoParagraph key={p}>{p}</PhotoParagraph>
                    ))}
                  </Photo>
                </PhotoFrame>
              </Bubble>
            </Row>
          </MessageList>
          <JumpButton type="button" aria-label="Scroll to latest"><JumpIcon /></JumpButton>
        </Conversation>
        <Composer onSubmit={(e) => e.preventDefault()}>
          <InputPill>
            <button type="button" aria-label="Emoji"><SmileIcon /></button>
            <MessageInput type="text" aria-label="Message" placeholder="Type a message" />
            <Attachments>
              <button type="button" aria-label="Attach"><ClipIcon /></button>
              <button type="button" aria-label="Camera"><CameraIcon /></button>
            </Attachments>
          </InputPill>
          <MicButton type="button" aria-label="Record voice message"><MicIcon /></MicButton>
        </Composer>
      </Screen>
    </>
  );
}
